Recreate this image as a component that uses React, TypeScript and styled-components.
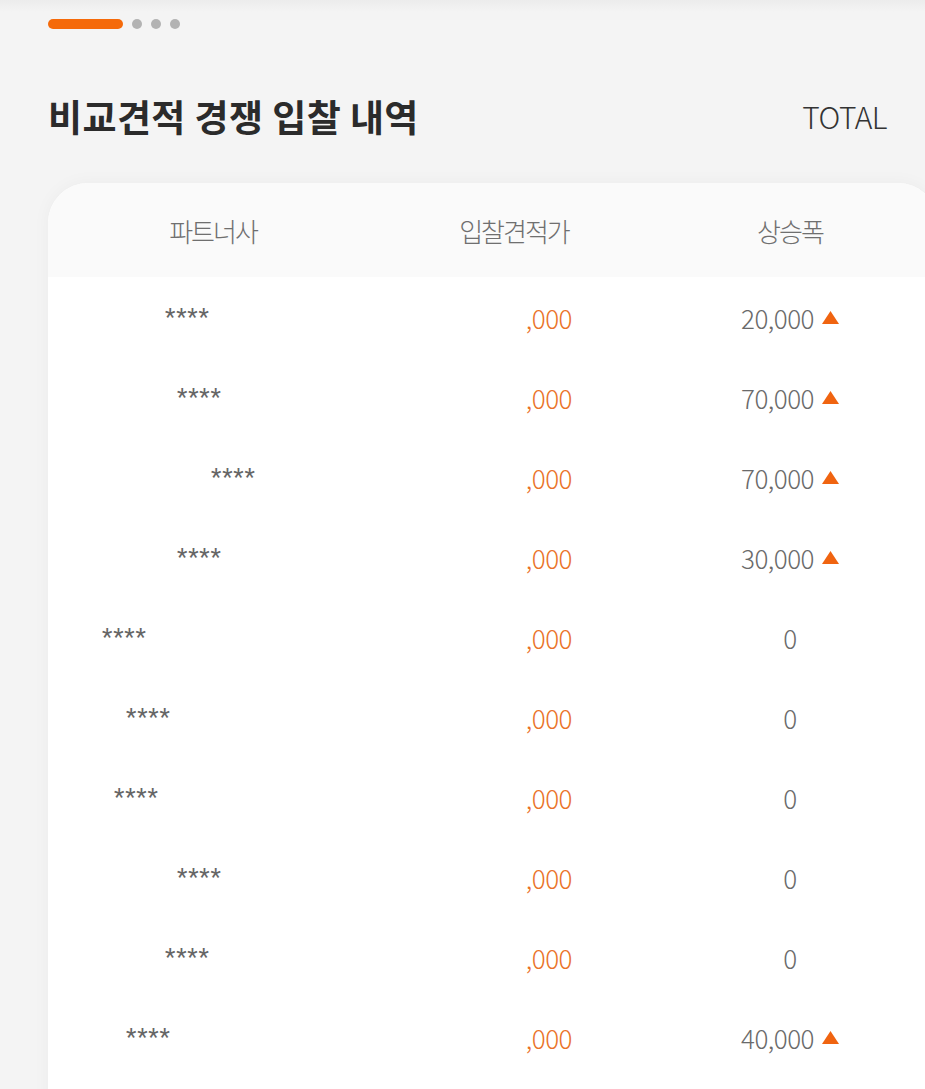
import React from 'react';
import styled, { createGlobalStyle } from 'styled-components';

const GlobalStyle = createGlobalStyle`
  html, body {
    margin: 0;
    padding: 0;
    background: #f4f4f4;
    overflow: hidden;
  }
  body {
    font-family: 'Noto Sans CJK KR', 'Noto Sans', sans-serif;
  }
`;

const Page = styled.div`
  width: 925px;
  height: 1089px;
  overflow: hidden;
  padding-left: 48px;
  box-sizing: border-box;
  background: linear-gradient(#ececec 0px, #f4f4f4 12px);
`;

const Indicator = styled.div`
  display: flex;
  align-items: center;
  gap: 9px;
  height: 10px;
  margin-top: 19px;
`;

const ActiveBar = styled.span`
  width: 75px;
  height: 10px;
  border-radius: 5px;
  background: #f56a0a;
`;

const Dot = styled.span`
  width: 10px;
  height: 10px;
  border-radius: 50%;
  background: #b3b3b3;
`;

const TitleRow = styled.div`
  display: flex;
  align-items: center;
  justify-content: space-between;
  height: 60px;
  margin-top: 57px;
  padding-right: 38px;
`;

const Title = styled.h1`
  margin: 0;
  font-size: 37px;
  font-weight: 700;
  letter-spacing: 0.4px;
  color: #2b2b2b;
`;

const Total = styled.span`
  font-size: 30px;
  font-weight: 300;
  letter-spacing: -0.5px;
  color: #333;
`;

const Card = styled.div`
  margin-top: 37px;
  width: 890px;
  padding-bottom: 40px;
  border-radius: 40px 40px 0 0;
  background: #fff;
  overflow: hidden;
  box-shadow: 0 0 18px rgba(0, 0, 0, 0.04);
`;

const Grid = styled.div`
  display: grid;
  grid-template-columns: 330px 272px 1fr;
`;

const HeaderRow = styled(Grid)`
  height: 94px;
  align-items: center;
  background: #fafafa;
`;

const HeaderCell = styled.div<{ $shift?: number }>`
  text-align: center;
  font-size: 26px;
  font-weight: 300;
  letter-spacing: -2px;
  color: #6f6f6f;
  padding-right: ${(p) => p.$shift ?? 0}px;
`;

const Row = styled(Grid)`
  height: 80px;
  align-items: center;
`;

const Partner = styled.div<{ $indent: number }>`
  padding-left: ${(p) => p.$indent}px;
  font-family: Roboto, 'Liberation Sans', sans-serif;
  font-size: 24px;
  letter-spacing: 0.8px;
  color: #666;
  line-height: 1;
`;

const Price = styled.div`
  text-align: right;
  padding-right: 78px;
  font-size: 26px;
  font-weight: 300;
  color: #ea7228;
  letter-spacing: -0.5px;
`;

const Rise = styled.div`
  display: flex;
  align-items: center;
  justify-content: center;
  gap: 8px;
  padding-right: 8px;
  font-size: 26px;
  font-weight: 300;
  color: #6a6a6a;
  letter-spacing: -0.5px;
`;

const Up = () => (
  <svg width="17" height="13" viewBox="0 0 17 13">
    <path d="M8.5 0 L17 13 L0 13 Z" fill="#f06410" />
  </svg>
);

const rows = [
  { indent: 117, rise: '20,000' },
  { indent: 129, rise: '70,000' },
  { indent: 163, rise: '70,000' },
  { indent: 129, rise: '30,000' },
  { indent: 54, rise: '0' },
  { indent: 78, rise: '0' },
  { indent: 66, rise: '0' },
  { indent: 129, rise: '0' },
  { indent: 117, rise: '0' },
  { indent: 78, rise: '40,000' },
];

export default function App() {
  return (
    <>
      <GlobalStyle />
      <Page>
        <Indicator>
          <ActiveBar />
          <Dot />
          <Dot />
          <Dot />
        </Indicator>
        <TitleRow>
          <Title>비교견적 경쟁 입찰 내역</Title>
          <Total>TOTAL</Total>
        </TitleRow>
        <Card>
          <HeaderRow>
            <HeaderCell>파트너사</HeaderCell>
            <HeaderCell>입찰견적가</HeaderCell>
            <HeaderCell $shift={8}>상승폭</HeaderCell>
          </HeaderRow>
          {rows.map((r, i) => (
            <Row key={i}>
              <Partner $indent={r.indent}>****</Partner>
              <Price>,000</Price>
              <Rise>
                <span>{r.rise}</span>
                {r.rise !== '0' && <Up />}
              </Rise>
            </Row>
          ))}
        </Card>
      </Page>
    </>
  );
}
